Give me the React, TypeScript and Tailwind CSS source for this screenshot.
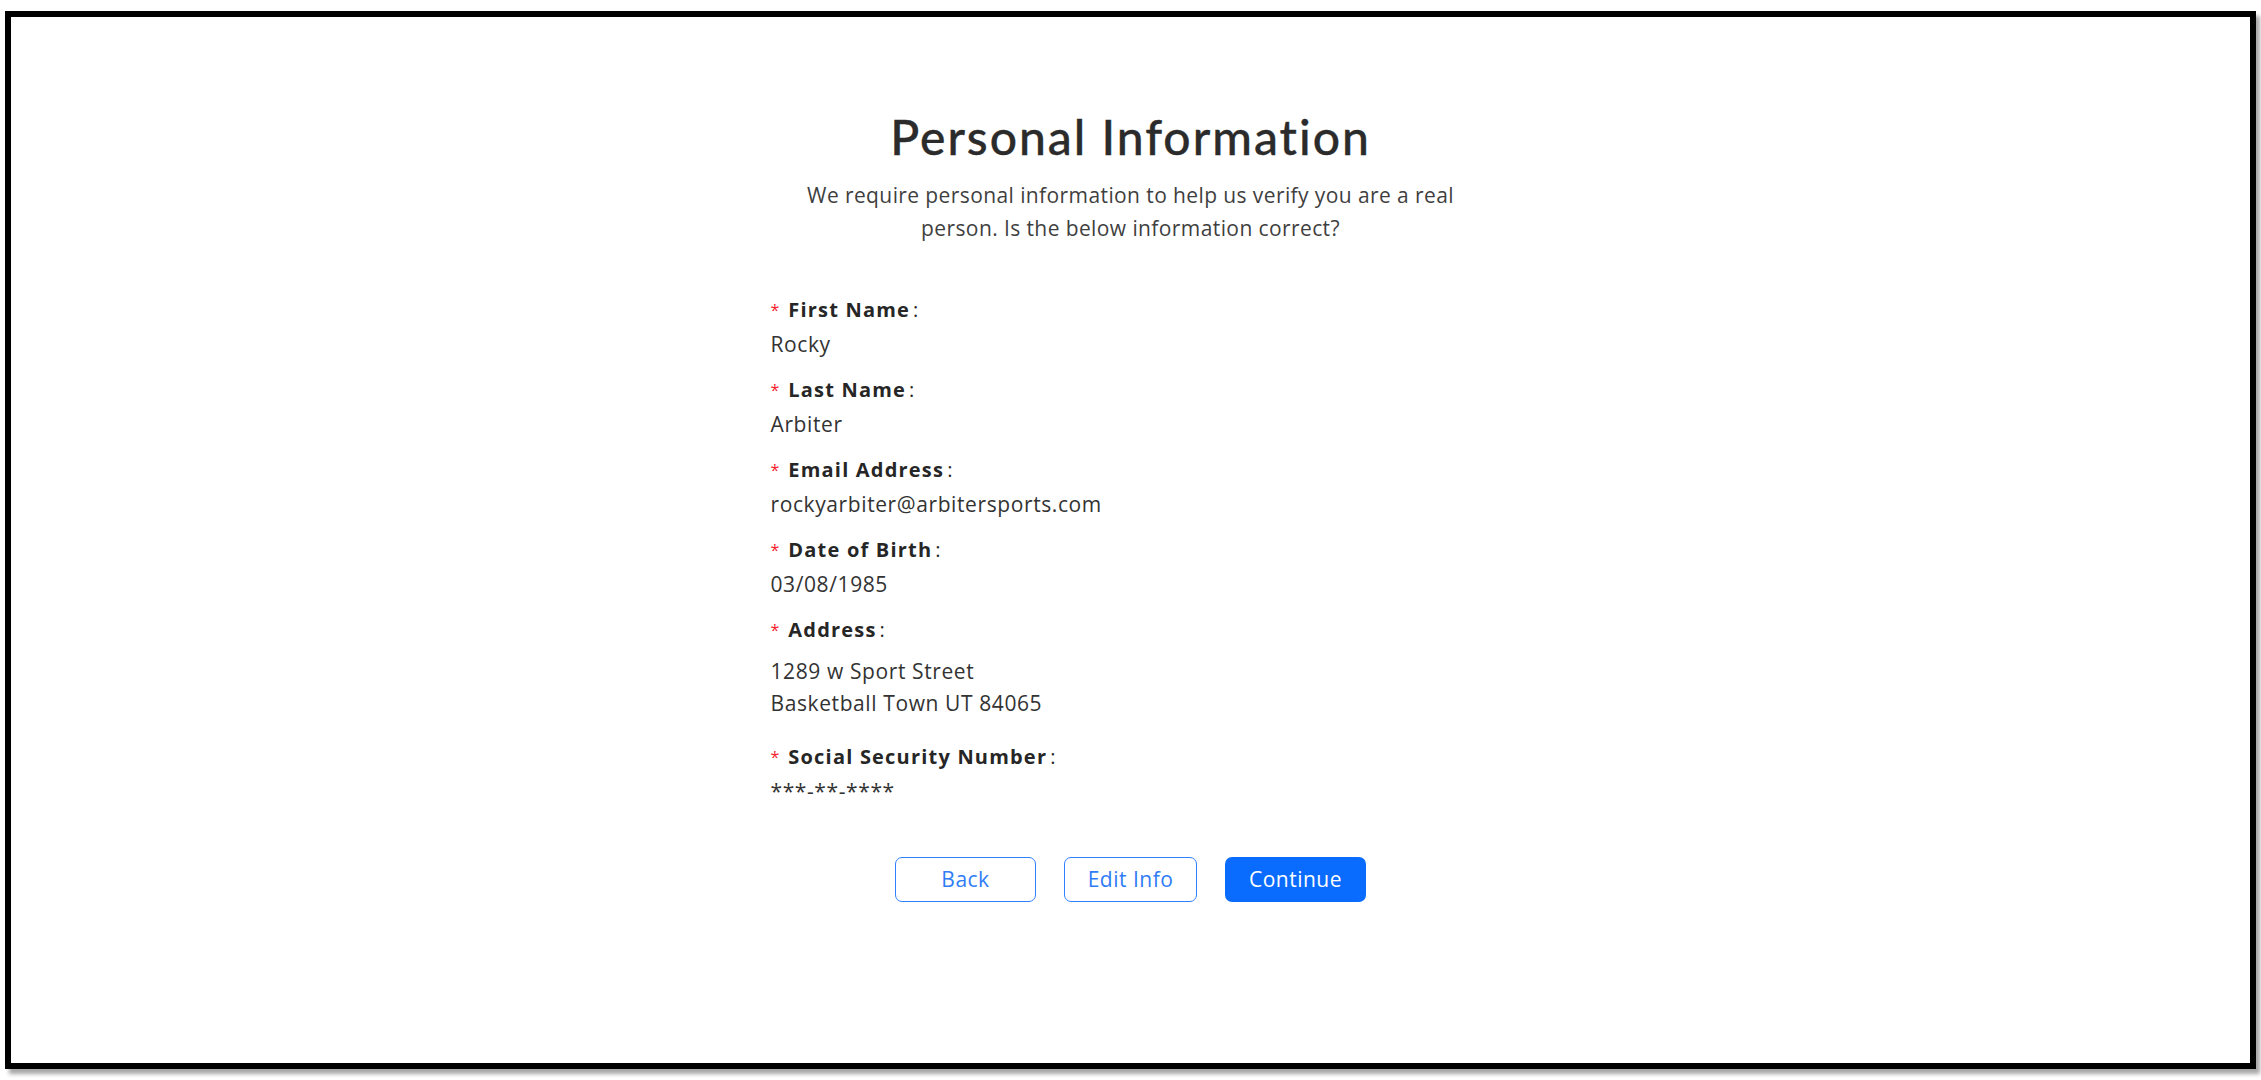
import React from "react";

const fields: { label: string; value: string[]; addr?: boolean }[] = [
  { label: "First Name", value: ["Rocky"] },
  { label: "Last Name", value: ["Arbiter"] },
  { label: "Email Address", value: ["rockyarbiter@arbitersports.com"] },
  { label: "Date of Birth", value: ["03/08/1985"] },
  { label: "Address", value: ["1289 w Sport Street", "Basketball Town UT 84065"], addr: true },
  { label: "Social Security Number", value: ["***-**-****"] },
];

export default function App() {
  return (
    <div className="min-h-[1080px] w-full bg-white pt-[11px] pl-[5px]" style={{ fontFamily: '"Open Sans", sans-serif' }}>
      <div className="box-border flex h-[1058px] w-[2251px] flex-col items-center border-[6px] border-black bg-white shadow-[4px_5px_4px_rgba(0,0,0,0.35)]">
        <h1
          className="mt-[92px] text-[48px] leading-[56px] font-medium tracking-[2px] text-[#2b2b2b] [-webkit-text-stroke:0.35px_#2b2b2b]"
          style={{ fontFamily: 'Lato, "Open Sans", sans-serif' }}
        >
          Personal Information
        </h1>
        <p className="mt-[14px] w-[690px] text-center text-[21px] leading-[33px] tracking-[0.4px] text-[#3f3f3f]">
          We require personal information to help us verify you are a real person. Is the below information correct?
        </p>
        <div className="mt-[51px] flex w-[720px] flex-col gap-[18px]">
          {fields.map((f, i) => (
            <div key={f.label} className={i === 5 ? "mt-[6px] flex flex-col" : "flex flex-col"}>
              <div className={`flex h-[28px] items-center ${f.addr ? "mb-[11px]" : "mb-[6px]"}`}>
                <span className="mr-[9px] text-[16px] leading-none text-[#f5222d]">*</span>
                <span className="text-[20px] font-bold tracking-[1.2px] text-[#262626]">{f.label}</span>
                <span className="ml-[3px] text-[20px] text-[#262626]">:</span>
              </div>
              {f.value.map((v) => (
                <div
                  key={v}
                  className={`text-[21px] tracking-[0.6px] text-[#333333] ${f.addr ? "leading-[32px]" : "leading-[28px]"}`}
                >
                  {v}
                </div>
              ))}
            </div>
          ))}
        </div>
        <div className="mt-[52px] flex gap-[28px]">
          <button className="box-border h-[45px] w-[141px] rounded-[7px] border-[1.5px] border-[#2f80ff] bg-white text-[21px] tracking-[0.5px] text-[#2f7cf6]">
            Back
          </button>
          <button className="box-border h-[45px] w-[133px] rounded-[7px] border-[1.5px] border-[#2f80ff] bg-white text-[21px] tracking-[0.5px] text-[#2f7cf6]">
            Edit Info
          </button>
          <button className="box-border h-[45px] w-[141px] rounded-[7px] bg-[#0a6cff] text-[21px] tracking-[0.5px] text-white">
            Continue
          </button>
        </div>
      </div>
    </div>
  );
}
